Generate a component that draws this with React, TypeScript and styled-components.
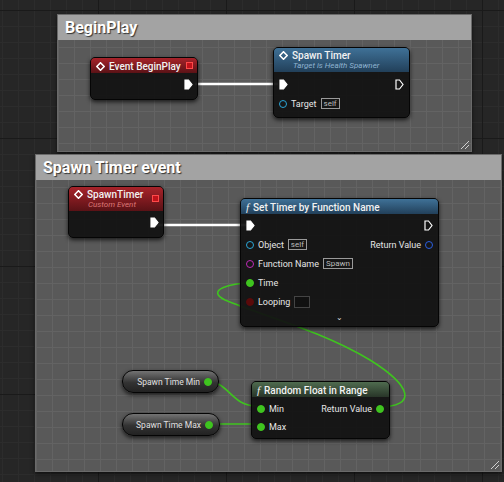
import React from 'react';
import styled, { createGlobalStyle } from 'styled-components';

const Global = createGlobalStyle`
  body { margin: 0; background: #262626; font-family: Roboto, "Liberation Sans", sans-serif; }
`;

const Canvas = styled.div`
  position: relative;
  width: 504px;
  height: 482px;
  overflow: hidden;
  background-color: #262626;
  background-image:
    linear-gradient(#1a1a1a 1px, transparent 1px),
    linear-gradient(90deg, #1a1a1a 1px, transparent 1px),
    linear-gradient(#2c2c2c 1px, transparent 1px),
    linear-gradient(90deg, #2c2c2c 1px, transparent 1px);
  background-size: 128px 128px, 128px 128px, 16px 16px, 16px 16px;
  background-position: -30px 10px, -30px 10px, -30px 10px, -30px 10px;
`;

type Box = { x: number; y: number; w: number; h: number };

const Comment = styled.div<Box>`
  position: absolute;
  left: ${({ x }) => x}px;
  top: ${({ y }) => y}px;
  width: ${({ w }) => w}px;
  height: ${({ h }) => h}px;
  background-color: #595959;
  background-image:
    linear-gradient(#636363 1px, transparent 1px),
    linear-gradient(90deg, #636363 1px, transparent 1px);
  background-size: 16px 16px;
  border: 1px solid #6a6a6a;
  box-shadow: 0 2px 4px rgba(0,0,0,0.6);
  &::after {
    content: '';
    position: absolute;
    right: 2px;
    bottom: 2px;
    width: 10px;
    height: 10px;
    background: repeating-linear-gradient(135deg, transparent 0 2px, #d0d0d0 2px 3px);
    clip-path: polygon(100% 0, 100% 100%, 0 100%);
  }
`;

const CommentHeader = styled.div`
  height: 25px;
  background: #a3a3a3;
  color: #fff;
  font-size: 16px;
  font-weight: 700;
  display: flex;
  align-items: center;
  padding-left: 7px;
  text-shadow: 1px 1px 1px #333;
`;

const Node = styled.div<{ x: number; y: number; w: number; pill?: boolean }>`
  position: absolute;
  left: ${({ x }) => x}px;
  top: ${({ y }) => y}px;
  width: ${({ w }) => w}px;
  background: ${({ pill }) => (pill ? 'linear-gradient(#737373, #333 55%, #222)' : 'rgba(18,18,18,0.94)')};
  border: 1px solid #050505;
  border-radius: ${({ pill }) => (pill ? '11px' : '5px')};
  box-shadow: 0 2px 4px rgba(0,0,0,0.7);
  overflow: hidden;
  color: #e6e6e6;
  font-size: 9px;
`;

const headerColors: Record<string, string> = {
  red: 'linear-gradient(180deg, #a8232a, #5a1216)',
  blue: 'linear-gradient(180deg, #3f7197, #22405a)',
  green: 'linear-gradient(180deg, #4f6b4f, #283528)',
};

const NodeHeader = styled.div<{ tone: string; tall?: boolean }>`
  background: ${({ tone }) => headerColors[tone]};
  height: ${({ tall }) => (tall ? 24 : 15)}px;
  padding: 2px 5px 0;
  box-sizing: border-box;
  display: flex;
  flex-direction: column;
  justify-content: ${({ tall }) => (tall ? 'flex-start' : 'center')};
  position: relative;
`;

const Title = styled.div`
  display: flex;
  align-items: center;
  gap: 4px;
  font-size: 10px;
  font-weight: 500;
  color: #f2f2f2;
  line-height: 11px;
`;

const Subtitle = styled.div<{ tone: string }>`
  font-style: italic;
  font-size: 8px;
  color: ${({ tone }) => (tone === 'red' ? '#d77' : '#8fb3d0')};
  padding-left: 14px;
  line-height: 10px;
`;

const Delegate = styled.span`
  position: absolute;
  right: 4px;
  top: 4px;
  width: 5px;
  height: 5px;
  background: #c1121a;
  border: 1px solid #ff4a4a;
`;

const Body = styled.div<{ pad?: string }>`
  padding: ${({ pad }) => pad || '5px 6px'};
  display: flex;
  flex-direction: column;
  gap: 8px;
`;

const Row = styled.div<{ end?: boolean }>`
  display: flex;
  align-items: center;
  justify-content: ${({ end }) => (end ? 'flex-end' : 'space-between')};
  height: 11px;
`;

const Side = styled.div`
  display: flex;
  align-items: center;
  gap: 4px;
`;

const Pin = styled.span<{ color: string; filled?: boolean }>`
  width: 8px;
  height: 8px;
  border-radius: 50%;
  border: 1.5px solid ${({ color }) => color};
  background: ${({ filled, color }) => (filled ? color : 'transparent')};
  box-sizing: border-box;
  flex-shrink: 0;
`;

const Field = styled.span<{ box?: boolean }>`
  border: 1px solid #9a9a9a;
  padding: 0 2px;
  font-size: 8px;
  color: #bbb;
  line-height: 9px;
  ${({ box }) => (box ? 'width: 10px; height: 10px; background:#111; border-color:#444;' : '')}
`;

const Chevron = styled.div`
  text-align: center;
  font-size: 8px;
  color: #ddd;
  margin-top: -2px;
`;

const PillRow = styled.div`
  height: 21px;
  display: flex;
  align-items: center;
  justify-content: flex-end;
  gap: 4px;
  padding-right: 6px;
  font-size: 8.5px;
  color: #e0e0e0;
`;

const Exec = ({ filled = true }: { filled?: boolean }) => (
  <svg width="9" height="11" viewBox="0 0 9 11">
    <path d="M1 1h3.5L8 5.5 4.5 10H1z" fill={filled ? '#fff' : 'none'} stroke="#fff" strokeWidth="1.2" />
  </svg>
);

const EventIcon = () => (
  <svg width="9" height="9" viewBox="0 0 9 9">
    <path d="M4.5 0.8L8.2 4.5 4.5 8.2 0.8 4.5z" fill="none" stroke="#fff" strokeWidth="1.6" />
  </svg>
);

const FnIcon = () => <span style={{ fontStyle: 'italic', fontFamily: 'Liberation Serif, serif', fontSize: 11 }}>f</span>;

const Wires = styled.svg`
  position: absolute;
  left: 0;
  top: 0;
  pointer-events: none;
`;

export default function App() {
  return (
    <>
      <Global />
      <Canvas>
        <Comment x={57} y={14} w={413} h={136}>
          <CommentHeader>BeginPlay</CommentHeader>
        </Comment>
        <Comment x={35} y={154} w={465} h={316}>
          <CommentHeader>Spawn Timer event</CommentHeader>
        </Comment>

        <Wires width="504" height="482">
          <path d="M195 84 H278" stroke="#fff" strokeWidth="2.5" fill="none" />
          <path d="M154 225 H248" stroke="#fff" strokeWidth="2.5" fill="none" />
          <path d="M205 381 C230 381, 230 406, 257 406" stroke="#3fc41f" strokeWidth="1.6" fill="none" />
          <path d="M207 424 H258" stroke="#3fc41f" strokeWidth="1.6" fill="none" />
          <path d="M377 407 C420 407, 410 385, 370 360 C320 330, 260 315, 225 300 C205 290, 230 283, 252 283" stroke="#3fc41f" strokeWidth="1.6" fill="none" />
        </Wires>

        <Node x={90} y={57} w={106}>
          <NodeHeader tone="red">
            <Title><EventIcon />Event BeginPlay</Title>
            <Delegate />
          </NodeHeader>
          <Body pad="6px 4px 9px"><Row end><Exec /></Row></Body>
        </Node>

        <Node x={273} y={47} w={135}>
          <NodeHeader tone="blue" tall>
            <Title><EventIcon />Spawn Timer</Title>
            <Subtitle tone="blue">Target is Health Spawner</Subtitle>
          </NodeHeader>
          <Body pad="7px 5px 8px">
            <Row><Exec /><Exec filled={false} /></Row>
            <Row>
              <Side><Pin color="#2aa6d8" /><span>Target</span><Field>self</Field></Side>
            </Row>
          </Body>
        </Node>

        <Node x={68} y={186} w={94}>
          <NodeHeader tone="red" tall>
            <Title><EventIcon />SpawnTimer</Title>
            <Subtitle tone="red">Custom Event</Subtitle>
            <Delegate style={{ top: 8 }} />
          </NodeHeader>
          <Body pad="6px 4px 9px"><Row end><Exec /></Row></Body>
        </Node>

        <Node x={240} y={198} w={197}>
          <NodeHeader tone="blue">
            <Title><FnIcon />Set Timer by Function Name</Title>
          </NodeHeader>
          <Body pad="6px 5px 4px">
            <Row><Exec /><Exec filled={false} /></Row>
            <Row>
              <Side><Pin color="#2aa6d8" /><span>Object</span><Field>self</Field></Side>
              <Side><span>Return Value</span><Pin color="#2a5ee0" /></Side>
            </Row>
            <Row><Side><Pin color="#c02ab8" /><span>Function Name</span><Field>Spawn</Field></Side></Row>
            <Row><Side><Pin color="#3fc41f" filled /><span>Time</span></Side></Row>
            <Row><Side><Pin color="#5a0a0a" filled /><span>Looping</span><Field box /></Side></Row>
            <Chevron>⌄</Chevron>
          </Body>
        </Node>

        <Node x={122} y={370} w={95} pill>
          <PillRow>Spawn Time Min<Pin color="#3fc41f" filled /></PillRow>
        </Node>
        <Node x={122} y={413} w={96} pill>
          <PillRow>Spawn Time Max<Pin color="#3fc41f" filled /></PillRow>
        </Node>

        <Node x={251} y={381} w={137}>
          <NodeHeader tone="green">
            <Title><FnIcon />Random Float in Range</Title>
          </NodeHeader>
          <Body pad="6px 5px 6px" style={{ gap: 7 }}>
            <Row>
              <Side><Pin color="#3fc41f" filled /><span>Min</span></Side>
              <Side><span>Return Value</span><Pin color="#3fc41f" filled /></Side>
            </Row>
            <Row><Side><Pin color="#3fc41f" filled /><span>Max</span></Side></Row>
          </Body>
        </Node>
      </Canvas>
    </>
  );
}
